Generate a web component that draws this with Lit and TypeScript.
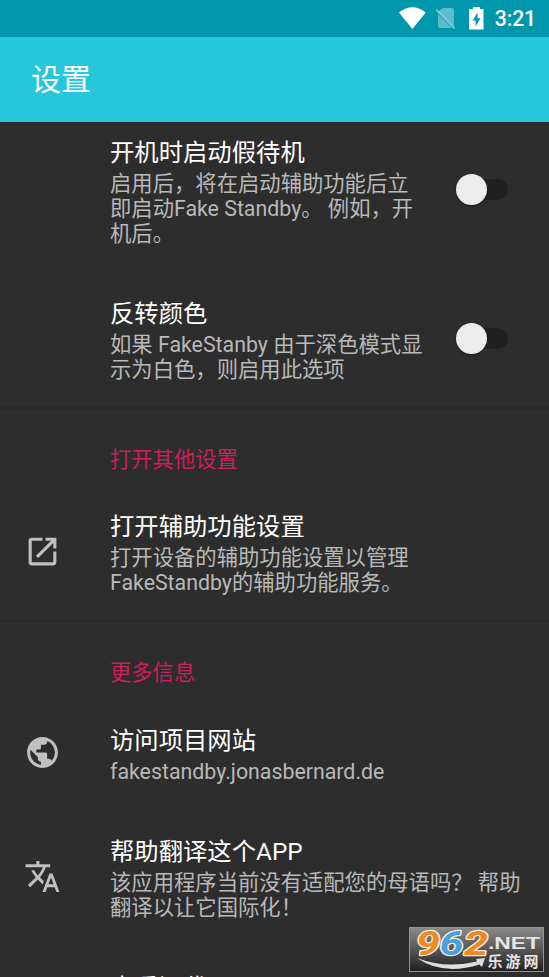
import { LitElement, html, css, svg, nothing, TemplateResult } from "lit";
import { customElement, property } from "lit/decorators.js";

type IconName = "open" | "globe" | "translate";

const iconPaths: Record<IconName, string> = {
  open: "M19 19H5V5h7V3H5a2 2 0 0 0-2 2v14a2 2 0 0 0 2 2h14c1.1 0 2-.9 2-2v-7h-2v7zM14 3v2h3.59l-9.83 9.83 1.41 1.41L19 6.41V10h2V3h-7z",
  globe:
    "M12 2C6.48 2 2 6.48 2 12s4.48 10 10 10 10-4.48 10-10S17.52 2 12 2zm-1 17.93c-3.95-.49-7-3.85-7-7.93 0-.62.08-1.21.21-1.79L9 15v1c0 1.1.9 2 2 2v1.93zm6.9-2.54c-.26-.81-1-1.39-1.9-1.39h-1v-3c0-.55-.45-1-1-1H8v-2h2c.55 0 1-.45 1-1V7h2c1.1 0 2-.9 2-2v-.41c2.93 1.19 5 4.06 5 7.41 0 2.08-.8 3.97-2.1 5.39z",
  translate:
    "M12.87 15.07l-2.54-2.51.03-.03c1.74-1.94 2.98-4.17 3.71-6.53H17V4h-7V2H8v2H1v1.99h11.17C11.5 7.92 10.44 9.75 9 11.35 8.07 10.32 7.3 9.19 6.69 8h-2c.73 1.63 1.73 3.17 2.98 4.56l-5.09 5.02L4 19l5-5 3.11 3.11.76-2.04zM18.5 10h-2L12 22h2l1.12-3h4.75L21 22h2l-4.5-12zm-2.62 7l1.62-4.33L19.12 17h-3.24z",
};

@customElement("status-bar")
class StatusBar extends LitElement {
  static styles = css`
    :host {
      display: flex;
      justify-content: flex-end;
      height: 37px;
      background: #0097ac;
      color: #fff;
    }
    svg { display: block; width: 150px; height: 37px; }
    text { font: 500 21.3px Roboto, sans-serif; fill: #fff; }
  `;
  render() {
    return html`<svg viewBox="399 0 150 37">
      <path fill="#fff" d="M399 12.4Q412.3 2 425.8 12.4L412.4 29z" />
      <path fill="#fff" fill-opacity=".36" d="M443 8h9q2 0 2 2v17L438 11.500zM438 14l14 14h-12q-2 0-2-2z" />
      <path stroke="#fff" stroke-opacity=".42" stroke-width="1.8" d="M436 9.500l18.500 19" />
      <path fill="#fff" fill-rule="evenodd" d="M473 7h7v2h3.500v20.500h-14.500V9h4zM477.600 12.500l-5 8h3v6l5-8.300h-3z" />
      <text x="494.700" y="26" textLength="41.500">3:21</text>
    </svg>`;
  }
}

@customElement("pref-row")
class PrefRow extends LitElement {
  @property() heading = "";
  @property({ attribute: false }) lines: string[] = [];
  @property() icon?: IconName;
  @property({ type: Boolean }) toggle = false;

  static styles = css`
    :host {
      display: grid;
      grid-template-columns: 110px 1fr auto;
      align-items: center;
      padding: 23.9px 0 25.1px;
    }
    .icon { display: flex; padding-left: 24px; }
    .icon svg { width: 37px; height: 37px; fill: #c0c0c0; }
    .title { font-size: 24.35px; line-height: 37px; color: #fff; white-space: nowrap; }
    .summary { font-size: 21.33px; line-height: 25px; color: #b9b9b9; white-space: nowrap; }
    .track {
      display: flex;
      align-items: center;
      width: 52px;
      height: 21px;
      margin-right: 41px;
    }
    .track::before {
      content: "";
      width: 31px;
      height: 31px;
      flex: none;
      border-radius: 50%;
      background: #ececec;
      box-shadow: 0 1px 2px #0006;
      z-index: 1;
    }
    .track::after {
      content: "";
      width: 36px;
      height: 21px;
      flex: none;
      margin-left: -15px;
      border-radius: 0 11px 11px 0;
      background: #202020;
    }
  `;
  render() {
    return html`
      <div class="icon">
        ${this.icon ? html`<svg viewBox="0 0 24 24">${svg`<path d=${iconPaths[this.icon]} />`}</svg>` : nothing}
      </div>
      <div>
        <div class="title">${this.heading}</div>
        ${this.lines.map((l) => html`<div class="summary">${l}</div>`)}
      </div>
      ${this.toggle ? html`<div class="track" role="switch" aria-checked="false"></div>` : nothing}
    `;
  }
}

@customElement("site-badge")
class SiteBadge extends LitElement {
  static styles = css`
    :host { display: block; width: 135px; height: 45px; }
    svg { display: block; }
    .digits {
      font: italic 700 33.500px Roboto, sans-serif;
      stroke: #f4eee5;
      stroke-width: 2.4px;
      paint-order: stroke;
      stroke-linejoin: round;
    }
    .orange { fill: #ed8b22; }
    .blue { fill: #4b9fdc; }
    .net { font: 700 17px "Liberation Sans", sans-serif; fill: #e4e4e4; }
    .cn { font: 700 15px "Noto Sans CJK SC", sans-serif; fill: #e4e4e4; }
  `;
  render() {
    return html`<svg width="135" height="45" viewBox="0 0 135 45">
      <defs>
        <linearGradient id="plate" x2="0" y2="1">
          <stop stop-color="#8b8b8b" /><stop offset="1" stop-color="#202020" />
        </linearGradient>
      </defs>
      <rect x=".5" y=".5" width="134" height="44" fill="url(#plate)" stroke="#929292" />
      <text class="digits orange" x="7" y="27.800" textLength="24" lengthAdjust="spacingAndGlyphs">9</text>
      <text class="digits blue" x="30.500" y="27.800" textLength="24" lengthAdjust="spacingAndGlyphs">6</text>
      <text class="digits orange" x="55" y="27.800" textLength="24" lengthAdjust="spacingAndGlyphs">2</text>
      <text class="net" x="79" y="21.800" textLength="52" lengthAdjust="spacingAndGlyphs">.NET</text>
      <text class="cn" x="78.500" y="39.800" textLength="51">乐游网</text>
      <path fill="#dedede" d="M8 31Q36 42 68 34.500L67 32L76 31L73 40L70.500 37.500Q34 49 8 31z" />
    </svg>`;
  }
}

@customElement("app-root")
class AppRoot extends LitElement {
  static styles = css`
    :host {
      display: flex;
      flex-direction: column;
      position: relative;
      height: 977px;
      overflow: hidden;
      background: #2d2d2d;
      font-family: Roboto, "Noto Sans CJK SC", sans-serif;
    }
    .toolbar {
      box-sizing: border-box;
      display: flex;
      align-items: center;
      flex: none;
      height: 85px;
      padding: 0 0 6px 31px;
      background: #26c6dc;
      color: #fff;
      font-size: 30px;
    }
    .list { flex: 1; min-height: 0; overflow: hidden; }
    .scrolled { margin-top: -12px; }
    .category {
      height: 26px;
      padding: 38px 0 11.5px 110px;
      border-top: 2px solid #282828;
      color: #cb1f5e;
      font-size: 21.3px;
      line-height: 26px;
    }
    site-badge { position: absolute; left: 409px; top: 927px; }
  `;
  row(heading: string, lines: string[], icon?: IconName, toggle = false): TemplateResult {
    return html`<pref-row .heading=${heading} .lines=${lines} .icon=${icon} .toggle=${toggle}></pref-row>`;
  }
  render() {
    return html`
      <status-bar></status-bar>
      <header class="toolbar">设置</header>
      <main class="list">
        <div class="scrolled">
          ${this.row("开机时启动假待机", ["启用后，将在启动辅助功能后立", "即启动Fake Standby。 例如，开", "机后。"], undefined, true)}
          ${this.row("反转颜色", ["如果 FakeStanby 由于深色模式显", "示为白色，则启用此选项"], undefined, true)}
          <div class="category">打开其他设置</div>
          ${this.row("打开辅助功能设置", ["打开设备的辅助功能设置以管理", "FakeStandby的辅助功能服务。"], "open")}
          <div class="category">更多信息</div>
          ${this.row("访问项目网站", ["fakestandby.jonasbernard.de"], "globe")}
          ${this.row("帮助翻译这个APP", ["该应用程序当前没有适配您的母语吗？ 帮助", "翻译以让它国际化！"], "translate")}
          ${this.row("查看源代码", [])}
        </div>
      </main>
      <site-badge></site-badge>
    `;
  }
}
